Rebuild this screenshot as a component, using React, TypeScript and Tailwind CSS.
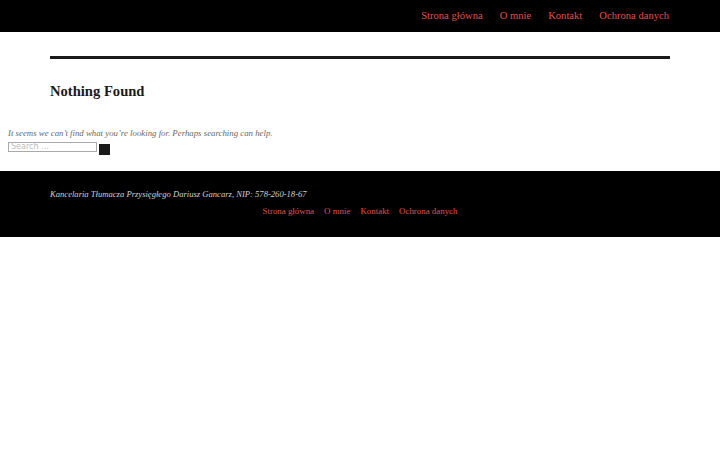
import React from 'react';

const navLinks = ['Strona główna', 'O mnie', 'Kontakt', 'Ochrona danych'];

export default function App() {
  return (
    <div className="min-h-[450px] bg-white font-['Liberation_Serif',serif]">
      <header className="h-8 bg-black flex items-center justify-end pr-[51px]">
        <nav className="flex gap-[17px] text-[10.6px] text-[#e0504f]">
          {navLinks.map((l) => (
            <a key={l} href="#" className="leading-none">
              {l}
            </a>
          ))}
        </nav>
      </header>

      <main className="pt-6 pb-[16px]">
        <div className="mx-[50px] border-t-[3px] border-[#1a1a1a]" />
        <h1 className="mx-[50px] mt-[25px] text-[14.6px] font-bold text-[#1a1a1a] leading-none">
          Nothing Found
        </h1>
        <div className="px-2 mt-[30px]">
          <p className="italic text-[8.8px] text-[#686868] leading-none">
            It seems we can’t find what you’re looking for. Perhaps searching can help.
          </p>
          <form className="flex items-start gap-[2px] mt-[5px]">
            <input
              type="search"
              placeholder="Search …"
              className="w-[89px] h-[10px] border border-[#aaa] text-[8px] px-[2px] placeholder:text-[#bbb] font-['DejaVu_Sans',sans-serif] outline-none"
            />
            <button type="button" className="w-[11px] h-[11px] bg-[#1a1a1a] mt-[2px]" />
          </form>
        </div>
      </main>

      <footer className="h-[66px] bg-black pt-[19px]">
        <p className="mx-[50px] italic text-[8.6px] text-[#d1d1d1] leading-none">
          Kancelaria Tłumacza Przysięgłego Dariusz Gancarz, NIP: 578-260-18-67
        </p>
        <nav className="flex justify-center gap-[10px] mt-[8px] text-[8.9px] text-[#e0504f] leading-none">
          {navLinks.map((l) => (
            <a key={l} href="#">
              {l}
            </a>
          ))}
        </nav>
      </footer>
    </div>
  );
}
